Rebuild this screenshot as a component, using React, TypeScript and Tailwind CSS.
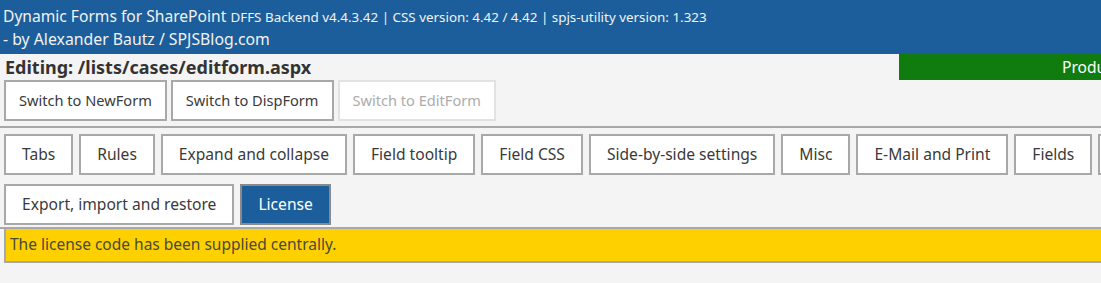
import React from "react";

const font = { fontFamily: '"Segoe UI", "Noto Sans", "Open Sans", sans-serif' };

function Btn({ children, active, disabled, narrow }: { children: React.ReactNode; active?: boolean; disabled?: boolean; narrow?: boolean }) {
  let cls = "h-[41px] flex items-center justify-center border-2 whitespace-nowrap ";
  cls += narrow ? "px-[13px] text-[14.6px] " : "px-[16px] text-[15.6px] ";
  if (active) cls += "bg-[#1c5e9b] border-[#8a8a8a] text-white";
  else if (disabled) cls += "bg-white border-[#e2e2e2] text-[#acacac]";
  else cls += "bg-white border-[#a8a8a8] text-[#3a3a3a]";
  return <div className={cls}>{children}</div>;
}

export default function App() {
  const tabs = ["Tabs", "Rules", "Expand and collapse", "Field tooltip", "Field CSS", "Side-by-side settings", "Misc", "E-Mail and Print", "Fields", "Custom JS"];
  return (
    <div className="w-[1101px] h-[283px] overflow-hidden bg-[#f4f4f4]" style={font}>
      <div className="w-[1300px]">
        <div className="h-[54px] bg-[#1c5e9b] text-[#f2f2f2] pl-[3px] pt-[5px]">
          <div className="leading-[22px] whitespace-nowrap">
            <span className="text-[15.6px]">Dynamic Forms for SharePoint</span>{" "}
            <span className="text-[13.4px]">DFFS Backend v4.4.3.42 | CSS version: 4.42 / 4.42 | spjs-utility version: 1.323</span>
          </div>
          <div className="text-[15.8px] leading-[22px]">- by Alexander Bautz / SPJSBlog.com</div>
        </div>
        <div className="flex justify-between h-[26px]">
          <div className="pl-[5px] text-[18px] font-bold text-[#333] leading-[26px]">Editing: /lists/cases/editform.aspx</div>
          <div className="w-[401px] bg-[#107c10] text-white text-[15.6px] pl-[163px] leading-[26px]">Production</div>
        </div>
        <div className="flex gap-[4px] pl-[4px] pb-[5px] border-b-2 border-[#a8a8a8]">
          <Btn narrow>Switch to NewForm</Btn>
          <Btn narrow>Switch to DispForm</Btn>
          <Btn narrow disabled>Switch to EditForm</Btn>
        </div>
        <div className="pt-[6px] pl-[4px] pb-[2px] border-b-2 border-[#a8a8a8]">
          <div className="flex flex-wrap gap-x-[6px] gap-y-[9px] w-[1240px]">
            {tabs.map((t) => (
              <Btn key={t}>{t}</Btn>
            ))}
            <Btn>Export, import and restore</Btn>
            <Btn active>License</Btn>
          </div>
        </div>
        <div className="ml-[4px] h-[34px] bg-[#ffd000] border-2 border-t-0 border-[#a8a8a8] text-[#4a4a3a] text-[15.5px] pl-[4px] flex items-center">
          The license code has been supplied centrally.
        </div>
      </div>
    </div>
  );
}
